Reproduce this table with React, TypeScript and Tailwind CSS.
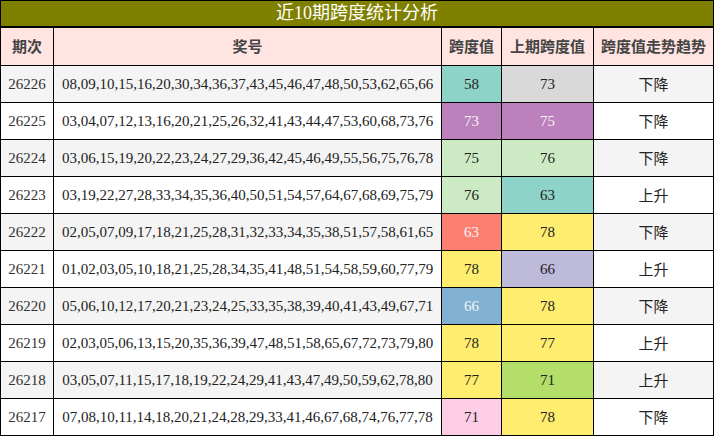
const rows: [string, string, number, string, number, string, string][] = [
  ["26226", "08,09,10,15,16,20,30,34,36,37,43,45,46,47,48,50,53,62,65,66", 58, "teal", 73, "gray", "下降"],
  ["26225", "03,04,07,12,13,16,20,21,25,26,32,41,43,44,47,53,60,68,73,76", 73, "purple", 75, "purple", "下降"],
  ["26224", "03,06,15,19,20,22,23,24,27,29,36,42,45,46,49,55,56,75,76,78", 75, "mint", 76, "mint", "下降"],
  ["26223", "03,19,22,27,28,33,34,35,36,40,50,51,54,57,64,67,68,69,75,79", 76, "mint", 63, "teal", "上升"],
  ["26222", "02,05,07,09,17,18,21,25,28,31,32,33,34,35,38,51,57,58,61,65", 63, "salmon", 78, "yellow", "下降"],
  ["26221", "01,02,03,05,10,18,21,25,28,34,35,41,48,51,54,58,59,60,77,79", 78, "yellow", 66, "lavender", "上升"],
  ["26220", "05,06,10,12,17,20,21,23,24,25,33,35,38,39,40,41,43,49,67,71", 66, "blue", 78, "yellow", "下降"],
  ["26219", "02,03,05,06,13,15,20,35,36,39,47,48,51,58,65,67,72,73,79,80", 78, "yellow", 77, "yellow", "上升"],
  ["26218", "03,05,07,11,15,17,18,19,22,24,29,41,43,47,49,50,59,62,78,80", 77, "yellow", 71, "green", "上升"],
  ["26217", "07,08,10,11,14,18,20,21,24,28,29,33,41,46,67,68,74,76,77,78", 71, "pink", 78, "yellow", "下降"],
];

const swatch: Record<string, string> = {
  teal: "bg-[#8dd3c7] text-[#222]",
  gray: "bg-[#d9d9d9] text-[#222]",
  purple: "bg-[#bc80bd] text-[#f4f4f4]",
  mint: "bg-[#ccebc5] text-[#222]",
  salmon: "bg-[#fb8072] text-[#f4f4f4]",
  yellow: "bg-[#ffed6f] text-[#222]",
  lavender: "bg-[#bebada] text-[#222]",
  blue: "bg-[#80b1d3] text-[#f4f4f4]",
  green: "bg-[#b3de69] text-[#222]",
  pink: "bg-[#fccde5] text-[#222]",
};

const headers = ["期次", "奖号", "跨度值", "上期跨度值", "跨度值走势趋势"];

export default function App() {
  return (
    <div
      className="w-[714px] bg-black p-px"
      style={{ fontFamily: '"Liberation Serif", "Noto Sans CJK SC", serif' }}
    >
      <div className="h-[25px] bg-[#808000] text-white text-[18px] leading-[25px] text-center">
        近10期跨度统计分析
      </div>
      <div className="mt-[2px] grid grid-cols-[52px_387px_59px_91px_119px] grid-rows-[37px_repeat(10,36px)] gap-px">
        {headers.map((h) => (
          <div
            key={h}
            className="bg-[#ffe4e1] flex items-center justify-center text-[15px] font-bold text-[#444]"
            style={{ fontFamily: '"Noto Sans CJK SC", sans-serif' }}
          >
            {h}
          </div>
        ))}
        {rows.map(([no, nums, span, c1, prev, c2, trend], i) => {
          const bg = i % 2 === 0 ? "bg-[#f4f4f4]" : "bg-white";
          return [
            <div key={no + "a"} className={`${bg} flex items-center justify-center text-[15px] text-[#333]`}>
              {no}
            </div>,
            <div key={no + "b"} className={`${bg} flex items-center justify-center text-[15px] text-[#222]`}>
              {nums}
            </div>,
            <div key={no + "c"} className={`${swatch[c1]} flex items-center justify-center text-[15px]`}>
              {span}
            </div>,
            <div key={no + "d"} className={`${swatch[c2]} flex items-center justify-center text-[15px]`}>
              {prev}
            </div>,
            <div
              key={no + "e"}
              className={`${bg} flex items-center justify-center text-[15px] text-[#222]`}
              style={{ fontFamily: '"Noto Sans CJK SC", sans-serif' }}
            >
              {trend}
            </div>,
          ];
        })}
      </div>
    </div>
  );
}
